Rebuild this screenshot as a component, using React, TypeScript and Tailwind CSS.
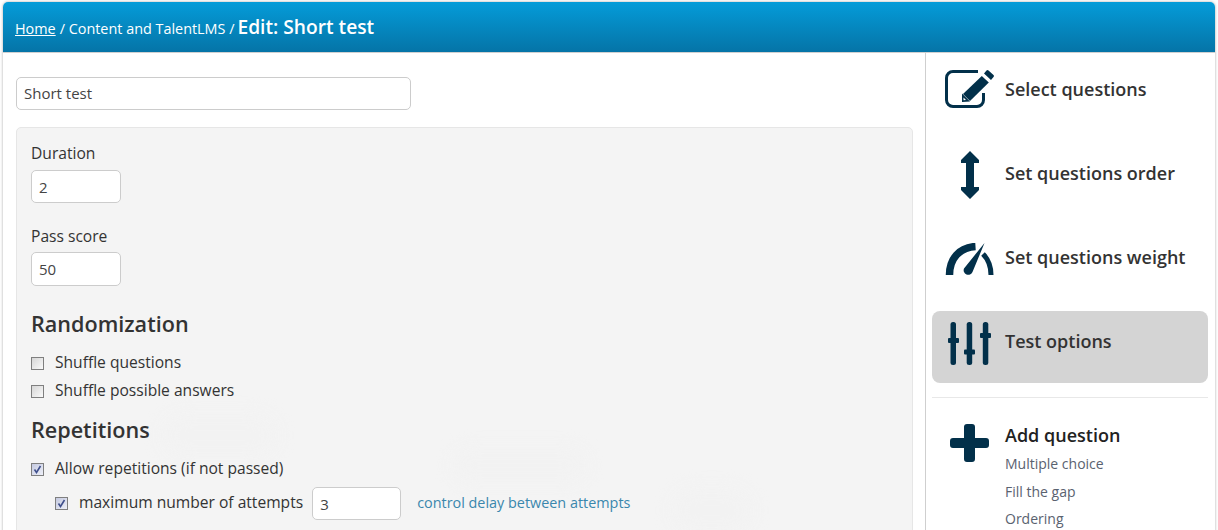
import type { ReactNode } from 'react'

const iconColor = '#02304a'

function EditIcon() {
  return (
    <svg width="50" height="38" viewBox="0 0 50 38" className="block">
      <path d="M33 1.500H8A6.500 6.500 0 0 0 1.500 8v22A6.500 6.500 0 0 0 8 36.500h24a6.500 6.500 0 0 0 6.500-6.500V23" fill="none" stroke={iconColor} strokeWidth="3" />
      <path d="M41.500.5a1.500 1.500 0 0 1 2 0l5 4.500a1.500 1.500 0 0 1 0 2L46 10l-7-6.500z" fill={iconColor} />
      <path d="M36.800 6l7 6.500L25 31l-7-7z" fill={iconColor} />
      <path d="M17 23.500l8 8-8 .5z" fill={iconColor} />
      <path d="M18.500 27.500l2.500 2.500-2.500.2z" fill="#fff" />
    </svg>
  )
}

function OrderIcon() {
  return (
    <svg width="18" height="48" viewBox="0 0 18 48" className="block">
      <path d="M9 0l9 9v3h-5v24h5v3l-9 9-9-9v-3h5V12H0V9z" fill={iconColor} />
    </svg>
  )
}

function WeightIcon() {
  return (
    <svg width="50" height="33" viewBox="0 0 50 33" className="block">
      <path d="M4.500 32C4.500 16 14 4.500 30.500 3.500" fill="none" stroke={iconColor} strokeWidth="7.500" />
      <path d="M38 11c5 5 8 12 8 21" fill="none" stroke={iconColor} strokeWidth="5" />
      <path d="M39.500 0L27.500 29a4.500 4.500 0 0 1-8.500-3.500z" fill={iconColor} />
    </svg>
  )
}

function SlidersIcon() {
  return (
    <svg width="44" height="44" viewBox="0 0 44 44" className="block">
      <g fill={iconColor}>
        <rect x="2.500" y="0" width="5.500" height="43" rx="2.500" />
        <rect x="0" y="16" width="11" height="5" rx="1" />
        <rect x="18.700" y="0" width="5.500" height="43" rx="2.500" />
        <rect x="16" y="27.500" width="11" height="5" rx="1" />
        <rect x="34.800" y="0" width="5.500" height="43" rx="2.500" />
        <rect x="32" y="11" width="11" height="5" rx="1" />
      </g>
    </svg>
  )
}

function PlusIcon() {
  return (
    <svg width="39" height="38" viewBox="0 0 39 38" className="block">
      <path d="M17 0h5a3 3 0 0 1 3 3v11h11a3 3 0 0 1 3 3v4a3 3 0 0 1-3 3H25v11a3 3 0 0 1-3 3h-5a3 3 0 0 1-3-3V24H3a3 3 0 0 1-3-3v-4a3 3 0 0 1 3-3h11V3a3 3 0 0 1 3-3z" fill={iconColor} />
    </svg>
  )
}

function Check({ checked = false }: { checked?: boolean }) {
  return (
    <span
      className={`flex h-[13px] w-[13px] shrink-0 items-center justify-center border border-[#7f7f7f] bg-gradient-to-br ${
        checked ? 'from-[#c4c9e0] to-[#eef0f8]' : 'from-[#d6d6d6] to-[#fafafa]'
      }`}
    >
      {checked && (
        <svg width="9" height="9" viewBox="0 0 9 9">
          <path d="M1.500 4.500l2 3 4-6.500" fill="none" stroke="#3f4f8c" strokeWidth="1.600" />
        </svg>
      )}
    </span>
  )
}

function SideItem({ icon, iconClass, label, active = false }: { icon: ReactNode; iconClass: string; label: string; active?: boolean }) {
  return (
    <div className={`flex h-[72px] items-start rounded-lg ${active ? 'bg-[#d4d4d4]' : ''}`}>
      <div className={`flex w-[73px] shrink-0 justify-center pl-[2px] ${iconClass}`}>{icon}</div>
      <span className="pt-[18px] text-[18px] font-semibold leading-[24px] text-[#333]">{label}</span>
    </div>
  )
}

export default function App() {
  return (
    <div className="h-[530px] w-[1218px] overflow-hidden bg-white pl-[3px] pr-[3px] pt-[2px] font-['Open_Sans',sans-serif] text-[15.600px] text-[#333]">
      <div className="h-[540px] rounded-t-[5px] shadow-[0_0_3px_rgba(0,0,0,0.35)]">
        <div className="flex h-[51px] items-baseline rounded-t-[5px] border-b border-[#d0d0d0] bg-gradient-to-b from-[#049cd9] to-[#0574a7] pl-3 pt-[15px] text-[14.400px] text-white">
          <a href="#" className="underline">Home</a>
          <span className="ml-1">/ Content and TalentLMS /</span>
          <span className="ml-[3px] text-[19.200px] font-semibold leading-none">Edit: Short test</span>
        </div>

        <div className="flex h-[489px] bg-white">
          <main className="w-[923px] shrink-0 border-r border-[#cfcfcf] pl-[13px] pt-[24px]">
            <input
              readOnly
              value="Short test"
              className="block h-[33px] w-[395px] rounded-[5px] border border-[#ccc] bg-white px-[7px] pb-[2px] text-[15px] text-[#444]"
            />
            <section className="relative mt-[17px] h-[500px] w-[897px] overflow-hidden rounded-t-[5px] border border-[#e6e6e6] bg-[#f4f4f4] pl-[14px] pt-[14px]">
              <div className="absolute left-[145px] top-[285px] h-[45px] w-[115px] rounded-full bg-[#f2f2f2] blur-sm" />
              <div className="absolute left-[435px] top-[320px] h-[35px] w-[135px] rounded-full bg-[#f2f2f2] blur-sm" />
              <div className="absolute left-[655px] top-[360px] h-[45px] w-[80px] rounded-full bg-[#f2f2f2] blur-sm" />
              <div className="relative">
                <label className="block leading-[22px]">Duration</label>
                <input
                  readOnly
                  value="2"
                  className="mt-[6px] block h-[33px] w-[90px] rounded-[5px] border border-[#ccc] bg-white px-[7px] text-[15px] text-[#444]"
                />
                <label className="mt-[22px] block leading-[22px]">Pass score</label>
                <input
                  readOnly
                  value="50"
                  className="mt-[5px] block h-[34px] w-[90px] rounded-[5px] border border-[#ccc] bg-white px-[7px] text-[15px] text-[#444]"
                />
                <h2 className="mt-[22px] text-[21.600px] font-semibold leading-[32px]">Randomization</h2>
                <div className="mt-[9px] flex h-[28px] items-center gap-[11px]">
                  <Check />
                  <span>Shuffle questions</span>
                </div>
                <div className="flex h-[28px] items-center gap-[11px]">
                  <Check />
                  <span>Shuffle possible answers</span>
                </div>
                <h2 className="mt-[9px] text-[21.600px] font-semibold leading-[32px]">Repetitions</h2>
                <div className="mt-[6px] flex h-[34px] items-center gap-[11px]">
                  <Check checked />
                  <span>Allow repetitions (if not passed)</span>
                </div>
                <div className="flex h-[34px] items-center pl-[24px]">
                  <Check checked />
                  <span className="ml-[11px]">maximum number of attempts</span>
                  <input
                    readOnly
                    value="3"
                    className="ml-[9px] mt-[1px] block h-[33px] w-[89px] rounded-[5px] border border-[#ccc] bg-white px-[7px] text-[15px] text-[#444]"
                  />
                  <a href="#" className="ml-4 text-[14.400px] text-[#3a87ad]">control delay between attempts</a>
                </div>
              </div>
            </section>
          </main>

          <aside className="flex-1 pl-[6px] pr-[7px] pt-[6px]">
            <div className="flex flex-col gap-3">
              <SideItem icon={<EditIcon />} iconClass="mt-[11px]" label="Select questions" />
              <SideItem icon={<OrderIcon />} iconClass="mt-[8px]" label="Set questions order" />
              <SideItem icon={<WeightIcon />} iconClass="mt-[16px]" label="Set questions weight" />
              <SideItem icon={<SlidersIcon />} iconClass="mt-[11px]" label="Test options" active />
            </div>
            <div className="mt-[14px] flex border-t border-[#e8e8e8] pt-[25px]">
              <div className="mt-[1px] flex w-[73px] shrink-0 justify-center pl-[2px]"><PlusIcon /></div>
              <div>
                <div className="text-[18px] font-semibold leading-[24px] text-[#222]">Add question</div>
                <ul className="mt-[7px] text-[14px] text-[#5a6270]">
                  <li className="leading-[20px]">Multiple choice</li>
                  <li className="mt-2 leading-[20px]">Fill the gap</li>
                  <li className="mt-[7px] leading-[20px]">Ordering</li>
                </ul>
              </div>
            </div>
          </aside>
        </div>
      </div>
    </div>
  )
}
